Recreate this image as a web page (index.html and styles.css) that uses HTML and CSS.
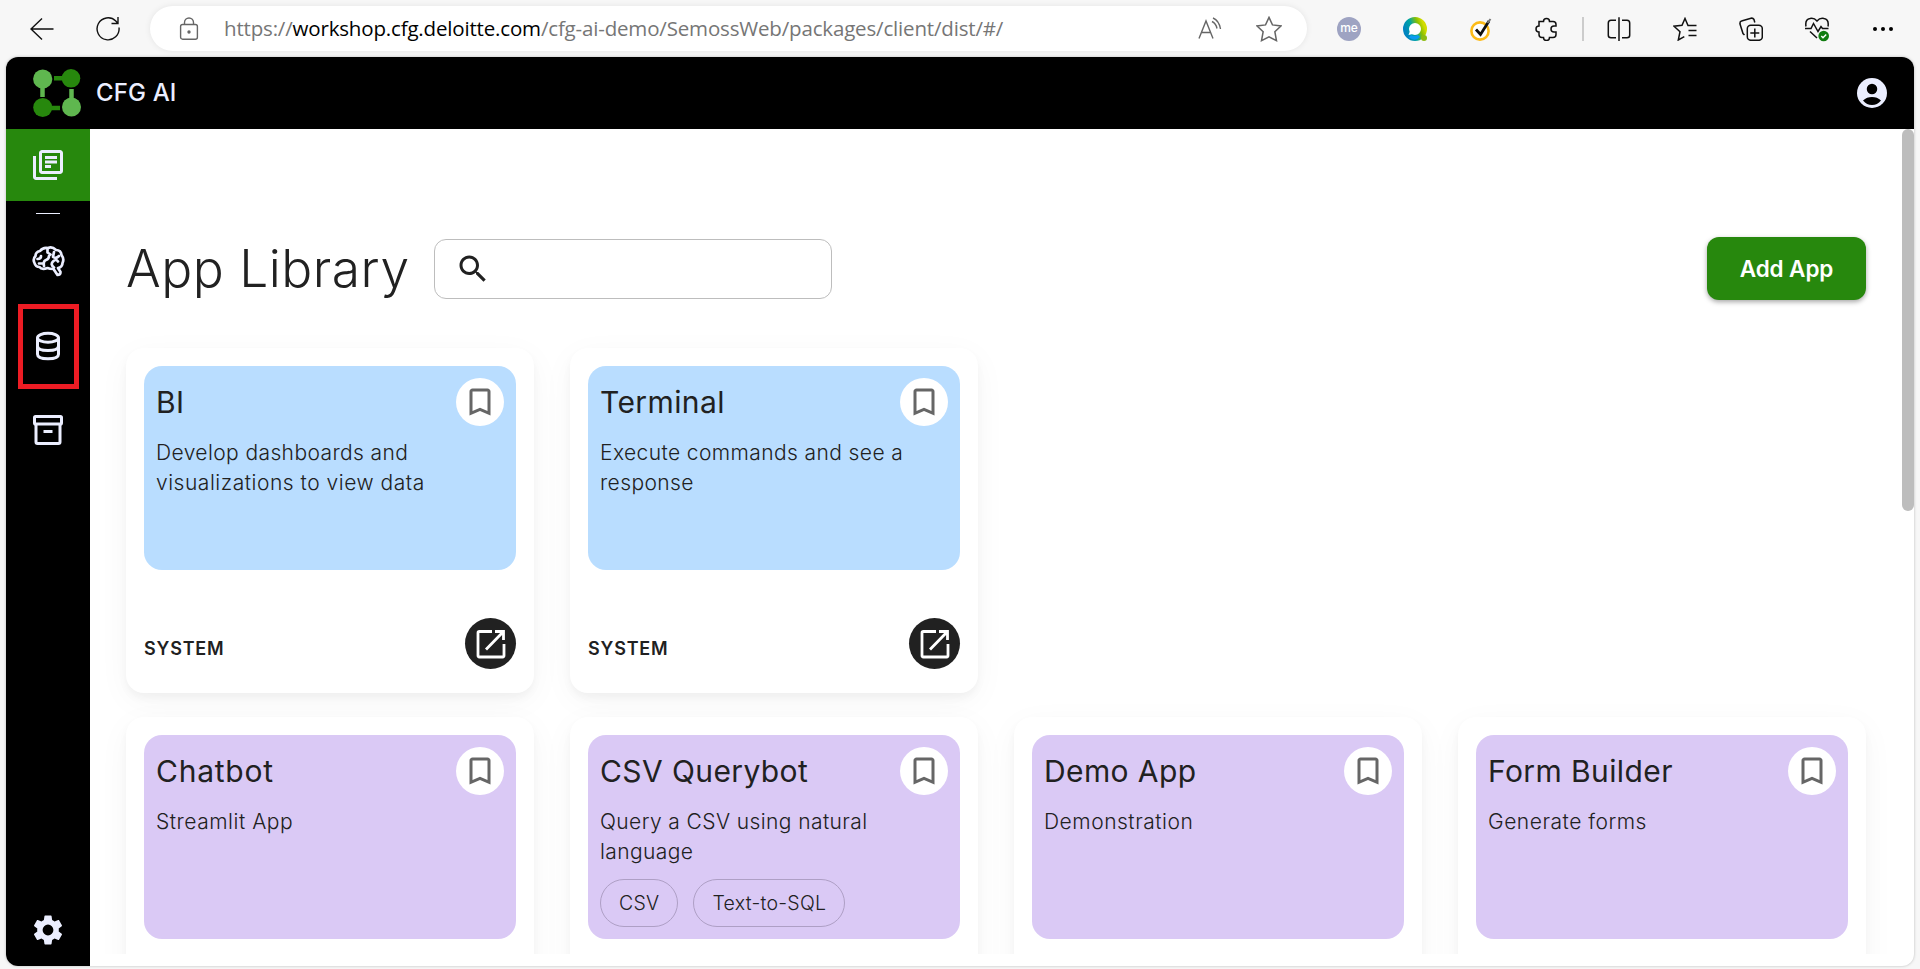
FILE: index.html
```html
<!DOCTYPE html>
<html lang="en">
<head>
<meta charset="utf-8">
<title>CFG AI</title>
<link rel="stylesheet" href="styles.css">
</head>
<body>
<svg width="0" height="0" class="defs">
  <symbol id="bookmark" viewBox="0 0 24 24"><path fill="#666" d="M17 3H7c-1.100 0-2 .9-2 2v16l7-3 7 3V5c0-1.100-.9-2-2-2zm0 15-5-2.180L7 18V5h10v13z"/></symbol>
  <symbol id="open" viewBox="0 0 36 36"><path fill="none" stroke="#fff" stroke-width="2.800" d="M19 5.500H6.400Q5 5.500 5 6.900V29.600Q5 31 6.400 31H29.600Q31 31 31 29.600V18M22 5.500H30.500V14M30.500 5.500L13 23.500"/></symbol>
</svg>
<div class="browser">
  <svg class="i back" viewBox="0 0 24 24"><path d="M23.500 12H1M12 1.500 1 12l11 10.500"/></svg>
  <svg class="i reload" viewBox="0 0 26 26"><path d="M24 11.500a11 11 0 1 1-3.200-6.500L23 7.500M23 1v6.500h-6.500"/></svg>
  <div class="address">
    <svg class="i lock" viewBox="0 0 20 24"><rect x="1.600" y="7.500" width="16.800" height="14.700" rx="2"/><path d="M5.500 7.500V5.500a4.500 4.500 0 0 1 9 0v2"/><circle cx="10" cy="15" r="1" fill="#666"/></svg>
    <div class="url">https://<b>workshop.cfg.deloitte.com</b>/cfg-ai-demo/SemossWeb/packages/client/dist/#/</div>
    <svg class="i read" viewBox="0 0 24 24"><path d="M1 21.500 8 4l7 17.500M3.500 15.500h9M14 4.500q4 2 5 7M15 1q6 2.500 7.500 11"/></svg>
    <svg class="i star" viewBox="0 0 24 24"><path d="m12 1.300 3.200 6.900 7.800 1-5.600 5.300 1.500 8.200-6.900-3.400-6.900 3.400 1.500-8.200L1 9.200l7.800-1z"/></svg>
  </div>
  <div class="tools">
    <div class="me">me</div>
    <svg class="t" viewBox="0 0 24 24"><defs><linearGradient id="q" x1="0" y1=".7" x2="1" y2=".3"><stop offset="0" stop-color="#0084c0"/><stop offset=".4" stop-color="#00a6a0"/><stop offset=".75" stop-color="#8cc000"/><stop offset="1" stop-color="#d2dc00"/></linearGradient></defs><circle cx="12" cy="12" r="9" fill="#fff" stroke="url(#q)" stroke-width="6"/><circle cx="21" cy="21" r="3" fill="#8dbb12"/><path d="M5.500 18 7 14l3 3z" fill="#fff"/><path d="M6 20.500Q12 25 17 20l-2-2q-4 2-7 0z" fill="#0b9cf0"/></svg>
    <svg class="t" viewBox="0 0 24 24"><circle cx="11" cy="14" r="8.600" fill="#fff" stroke="#fdbb17" stroke-width="2.600"/><path d="m7 12.500 4.500 5L20 4" fill="none" stroke="#111" stroke-width="2.800"/><path d="m18.500 6 3-4" stroke="#777" stroke-width="2"/></svg>
    <svg class="t l puzzle" viewBox="0 0 24 24"><path d="M4 4.500h4.500a3 3 0 0 1 6 0H18q3 0 3 3V9h-2a3 3 0 0 0 0 6h2v2.500q0 3-3 3h-3.500a3 3 0 0 1-6 0H7q-3 0-3-3V15a3 3 0 0 1 0-6z"/></svg>
    <i class="sep"></i>
    <svg class="t l" viewBox="0 0 24 24"><path d="M9 3.200H4Q1.300 3.200 1.300 6v12.300q0 2.500 2.700 2.500h5M15 3.200h5q2.700 0 2.700 2.800v12.300q0 2.500-2.700 2.500h-5M12 .3v23.700"/></svg>
    <svg class="t l" viewBox="0 0 24 24"><path d="M23.500 8.500H15l-3-7-3 6.800-8 .9 6 5.500L5.300 23l6-3.400M15.500 13.500h8M15.500 18.500h8"/></svg>
    <svg class="t l" viewBox="0 0 24 24"><rect x="8.300" y="8.300" width="15" height="15" rx="3.500"/><path d="M15.800 11.500v9M11.300 16h9M5.500 18 4 16.500 1 7Q.6 4.500 2.500 4L12 1.200q2-.4 3 1.300l.8 3"/></svg>
    <svg class="t l heart" viewBox="0 0 24 26"><path d="M1 10.500q-1.200-7 4-8Q9 1.500 12 5q3-3.500 7-2.500 5.200 1 4 8M0 12.500h6l2.500-5 4.500 8 3-5 1.500 2h6M5 15.500l7 6.500"/><circle cx="18.700" cy="20" r="5.300" fill="#107c10" stroke="none"/><path d="m16.300 20 1.700 1.700 3.200-3.200" stroke="#fff"/></svg>
    <svg class="t" viewBox="0 0 24 24"><circle cx="4" cy="12" r="2"/><circle cx="12" cy="12" r="2"/><circle cx="20" cy="12" r="2"/></svg>
  </div>
</div>
<div class="window">
  <header class="top">
    <svg class="logo" viewBox="0 0 48 48"><path d="M21 9.200h10" stroke="#27880d" stroke-width="4.500"/><path d="M9.500 18v10M38.500 20v10" stroke="#5fb74f" stroke-width="4.500"/><path d="M17 39h10" stroke="#27880d" stroke-width="4.500"/><circle cx="9.700" cy="10" r="9.600" fill="#5fb74f"/><circle cx="38" cy="9.300" r="9.300" fill="#27880d"/><circle cx="9.700" cy="38.500" r="9.500" fill="#27880d"/><circle cx="38.500" cy="38" r="9.500" fill="#5fb74f"/></svg>
    <span class="brand">CFG AI</span>
    <svg class="user" viewBox="2 2 20 20"><circle cx="12" cy="12" r="10" fill="#ebeeff"/><circle cx="12" cy="9.300" r="3.500"/><path d="M6 17q2.500-2.300 6-2.300t6 2.300q-2.500 3-6 3t-6-3z"/></svg>
  </header>
  <div class="main">
    <nav class="side">
      <a class="item active"><svg viewBox="0 0 24 24"><path d="M4 6H2v14c0 1.100.9 2 2 2h14v-2H4V6zm16-4H8c-1.100 0-2 .9-2 2v12c0 1.100.9 2 2 2h12c1.100 0 2-.9 2-2V4c0-1.100-.9-2-2-2zm0 14H8V4h12v12zM10 9h8v2h-8zm0 3h4v2h-4zm0-6h8v2h-8z"/></svg></a>
      <i class="rule"></i>
      <a class="item"><svg viewBox="0 0 36 36"><g fill="none" stroke="#ebeeff" stroke-width="2.700" stroke-linecap="round" stroke-linejoin="round"><path d="M10 7q3-4 8-3 4-2 8 2 5 0 5.500 5 3 4 1 8 0 4-4.500 5l2.500 4q0 3-3 3l-4-6q-4 0-6-1-6 2-8-1-4 0-5-4-2-4 1-7 0-4 4.500-5z"/><path d="M17.500 5v3.500l3 2M11 12q0 3-3.500 3M24 8l-1 5q3 2 6-1M14 22q-1-5 2-6t3-4M24 23.500q-4-3-1-6t5 0M9 19.500h4"/></g></svg></a>
      <a class="item"><svg viewBox="0 0 24 24"><g fill="none" stroke="#ebeeff" stroke-width="2"><ellipse cx="12" cy="6.500" rx="7" ry="3"/><path d="M5 6.500v11q0 3 7 3t7-3v-11M5 12q0 3 7 3t7-3"/></g></svg><i class="mark"></i></a>
      <a class="item"><svg viewBox="0 0 24 24"><g fill="none" stroke="#ebeeff" stroke-width="2"><rect x="3" y="3" width="18" height="5" rx=".7"/><path d="M4 8v12q0 1 1 1h14q1 0 1-1V8M9 13h6"/></g></svg></a>
      <a class="item last"><svg viewBox="0 0 24 24"><path d="m19.140 12.940c.04-.3.060-.61.060-.94 0-.32-.02-.64-.07-.94l2.030-1.580c.18-.14.230-.41.120-.61l-1.920-3.320c-.12-.22-.37-.29-.59-.22l-2.390.96c-.5-.38-1.030-.7-1.620-.94L14.400 2.810c-.04-.24-.24-.41-.48-.41h-3.840c-.24 0-.43.170-.47.410L9.250 5.350C8.660 5.590 8.120 5.920 7.630 6.290L5.240 5.330c-.22-.08-.47 0-.59.220L2.740 8.870c-.12.210-.08.470.12.610l2.030 1.580c-.05.300-.09.630-.09.940s.02.640.07.940l-2.030 1.580c-.18.140-.23.410-.12.610l1.920 3.320c.12.220.37.290.59.220l2.390-.96c.5.380 1.030.7 1.620.94l.36 2.540c.05.240.24.410.48.410h3.840c.24 0 .44-.17.47-.41l.36-2.540c.59-.24 1.130-.56 1.620-.94l2.390.96c.22.080.47 0 .59-.22l1.920-3.320c.12-.22.070-.47-.12-.61l-2.010-1.580zM12 15.600a3.600 3.600 0 1 1 0-7.200 3.600 3.600 0 0 1 0 7.200z"/></svg></a>
    </nav>
    <main class="page">
      <div class="headline">
        <h1>App Library</h1>
        <div class="search"><svg viewBox="0 0 24 24"><path d="M15.500 14h-.79l-.28-.27C15.410 12.590 16 11.110 16 9.500 16 5.910 13.090 3 9.500 3S3 5.910 3 9.500 5.910 16 9.500 16c1.610 0 3.090-.59 4.230-1.570l.27.280v.79l5 4.990L20.490 19l-4.990-5zm-6 0C7.010 14 5 11.990 5 9.500S7.010 5 9.500 5 14 7.010 14 9.500 11.990 14 9.500 14z"/></svg></div>
        <button class="add">Add App</button>
      </div>
      <div class="cards">
        <article class="card"><div class="tile blue"><div class="mk"><svg><use href="#bookmark"/></svg></div><h2>BI</h2><p>Develop dashboards and<br><span class="loose">visualizations to view data</span></p></div><footer><span>SYSTEM</span><div class="go"><svg><use href="#open"/></svg></div></footer></article>
        <article class="card"><div class="tile blue"><div class="mk"><svg><use href="#bookmark"/></svg></div><h2>Terminal</h2><p>Execute commands and see a<br>response</p></div><footer><span>SYSTEM</span><div class="go"><svg><use href="#open"/></svg></div></footer></article>
      </div>
      <div class="cards">
        <article class="card"><div class="tile violet"><div class="mk"><svg><use href="#bookmark"/></svg></div><h2 class="wide">Chatbot</h2><p class="loose">Streamlit App</p></div></article>
        <article class="card"><div class="tile violet"><div class="mk"><svg><use href="#bookmark"/></svg></div><h2>CSV Querybot</h2><p>Query a CSV using natural<br>language</p><div class="chips"><span class="chip">CSV</span><span class="chip">Text-to-SQL</span></div></div></article>
        <article class="card"><div class="tile violet"><div class="mk"><svg><use href="#bookmark"/></svg></div><h2>Demo App</h2><p class="loose">Demonstration</p></div></article>
        <article class="card"><div class="tile violet"><div class="mk"><svg><use href="#bookmark"/></svg></div><h2>Form Builder</h2><p class="loose">Generate forms</p></div></article>
      </div>
    </main>
    <div class="scroll"></div>
  </div>
</div>
</body>
</html>
```
FILE: styles.css
```css
* { box-sizing: border-box; }
html { height: 969px; overflow: hidden; }
body { margin: 0; width: 1920px; height: 969px; overflow: hidden; background: #f7f7f7; font-family: Inter, "Liberation Sans", sans-serif; color: #212121; }
h1, h2, p { margin: 0; }
svg { display: block; flex: none; }
.defs { position: absolute; }
.browser { height: 57px; display: flex; align-items: center; }
.i { fill: none; stroke: #666; stroke-width: 1.4; }
.back { width: 24px; height: 24px; margin-left: 30px; stroke: #111; }
.reload { width: 26px; height: 26px; margin-left: 41px; stroke: #111; }
.address { width: 1157px; height: 45px; margin-left: 29px; border-radius: 23px; background: #fff; box-shadow: 0 0 6px rgba(0,0,0,.08); display: flex; align-items: center; }
.lock { width: 20px; height: 24px; margin-left: 29px; }
.url { width: 945px; margin-left: 25px; padding-bottom: 2px; white-space: nowrap; font-family: "Open Sans", "Noto Sans", sans-serif; font-size: 20.500px; color: #767676; letter-spacing: -.17px; }
.url b { font-weight: 400; color: #000; }
.read { width: 24px; height: 24px; margin-left: 29px; }
.star { width: 26px; height: 26px; margin-left: 34px; }
.tools { width: 613px; padding-left: 17px; display: flex; align-items: center; }
.t, .me { width: 24px; height: 24px; margin-left: 42px; }
.me { margin-left: 13px; border-radius: 50%; background: #9ea3c2; color: #fff; font: 500 12px/22px Inter, sans-serif; text-align: center; }
.l { fill: none; stroke: #111; stroke-width: 1.5; }
.heart { height: 26px; }
.sep { width: 2px; height: 24px; margin: 0 -19px 0 23px; background: #ccc; }
.window { width: 1908px; height: 909px; margin-left: 6px; border-radius: 12px; background: #fff; overflow: hidden; box-shadow: 0 0 3px rgba(0,0,0,.25); }
.top { height: 72px; background: #000; display: flex; align-items: center; padding: 0 27px; }
.logo { width: 48px; height: 48px; }
.brand { margin-left: 15px; padding-bottom: 1px; flex: 1; font-size: 24px; font-weight: 500; color: #ebeeff; letter-spacing: .15px; }
.user { width: 30px; height: 30px; }
.main { height: 837px; display: flex; }
.side { width: 84px; background: #000; display: flex; flex-direction: column; align-items: center; }
.item { width: 84px; height: 84px; display: flex; align-items: center; justify-content: center; position: relative; }
.item svg { width: 36px; height: 36px; fill: #ebeeff; }
.active { height: 72px; background: #27880d; }
.rule { width: 24px; height: 1px; margin: 12px 0 6px; background: #ebeeff; }
.last { height: 72px; margin-top: auto; }
.mark { position: absolute; left: 12px; top: 0; width: 61px; height: 85px; border: 5px solid #ed1c24; }
.page { width: 1812px; height: 825px; overflow: hidden; padding: 108px 36px 0; }
.headline { display: flex; align-items: center; height: 63px; margin-bottom: 48px; }
h1 { width: 308px; font-size: 51.500px; font-weight: 350; line-height: 60px; padding-bottom: 2px; white-space: nowrap; letter-spacing: .5px; }
.search { width: 398px; height: 60px; border: 1px solid #bdbdbd; border-radius: 12px; display: flex; align-items: center; padding-left: 20px; }
.search svg { width: 36px; height: 36px; fill: #212121; }
.add { margin-left: auto; width: 159px; height: 63px; border: 0; border-radius: 12px; background: #27880d; color: #fff; font: 600 22.500px Inter, sans-serif; letter-spacing: -.1px; padding: 0; box-shadow: 0 2px 5px rgba(0,0,0,.35); white-space: nowrap; }
.cards { display: flex; gap: 36px; margin-bottom: 24px; }
.card { width: 408px; height: 345px; border-radius: 18px; background: #fff; padding: 18px; box-shadow: 0 8px 33px rgba(0,0,0,.04), 0 5px 9px rgba(0,0,0,.04); flex: none; }
.tile { position: relative; height: 204px; border-radius: 18px; padding: 12px; }
.blue { background: #b9ddff; }
.violet { background: #dac9f5; }
.mk { position: absolute; right: 12px; top: 12px; width: 48px; height: 48px; border-radius: 50%; background: #fff; display: flex; align-items: center; justify-content: center; }
.mk svg { width: 36px; height: 36px; }
h2 { font-size: 30px; font-weight: 400; line-height: 48px; letter-spacing: .4px; }
.wide { letter-spacing: .75px; }
p { margin-top: 12px; font-size: 21px; font-weight: 330; line-height: 30px; letter-spacing: .4px; white-space: nowrap; }
.loose { letter-spacing: .52px; }
.chips { display: flex; gap: 15px; margin-top: 12px; }
.chip { height: 48px; border: 1px solid #ae9fc5; border-radius: 24px; padding: 0 18px; font-size: 19.500px; font-weight: 330; line-height: 46px; letter-spacing: .27px; white-space: nowrap; }
footer { display: flex; justify-content: space-between; align-items: center; height: 51px; margin-top: 48px; font-size: 18px; font-weight: 600; letter-spacing: .8px; }
footer > span { padding-top: 10px; }
.go { width: 51px; height: 51px; border-radius: 50%; background: #212121; display: flex; align-items: center; justify-content: center; }
.go svg { width: 36px; height: 36px; }
.scroll { width: 12px; height: 382px; border-radius: 6px; background: #bdbdbd; }
```
